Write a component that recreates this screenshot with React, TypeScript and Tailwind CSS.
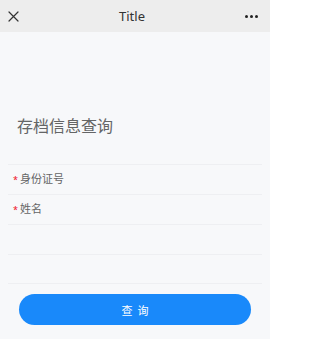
import React from "react";

export default function App() {
  const font = { fontFamily: '"Noto Sans", "Noto Sans CJK SC", sans-serif' };
  return (
    <div className="w-[270px] h-[339px] bg-[#f7f8fa] overflow-hidden" style={font}>
      <div className="h-[32px] bg-[#ededed] flex items-center justify-between px-[8px]">
        <svg width="11" height="11" viewBox="0 0 11 11">
          <path d="M1 1 L10 10 M10 1 L1 10" stroke="#333" strokeWidth="1.2" strokeLinecap="round" />
        </svg>
        <div className="text-[13px] text-[#333] leading-none">Title</div>
        <div className="flex gap-[2px] mr-[4px]">
          <span className="w-[3px] h-[3px] rounded-full bg-[#222]" />
          <span className="w-[3px] h-[3px] rounded-full bg-[#222]" />
          <span className="w-[3px] h-[3px] rounded-full bg-[#222]" />
        </div>
      </div>
      <div className="pt-[82px] pb-[26px] px-[17px]">
        <div className="text-[16px] leading-[24px] text-[#646566]">存档信息查询</div>
      </div>
      <div className="mx-[8px]">
        <div className="h-[30px] border-t border-[#eeeff2] flex items-center pl-[5px] text-[11px] text-[#646566]">
          <span className="text-[#ee0a24] mr-[2px] text-[9px]">*</span>身份证号
        </div>
        <div className="h-[30px] border-t border-[#eeeff2] flex items-center pl-[5px] text-[11px] text-[#646566]">
          <span className="text-[#ee0a24] mr-[2px] text-[9px]">*</span>姓名
        </div>
        <div className="h-[30px] border-t border-[#eeeff2]" />
        <div className="h-[30px] border-t border-b border-[#eeeff2]" />
      </div>
      <div className="px-[19px] mt-[10px]">
        <button className="w-full h-[31px] rounded-full bg-[#1989fa] text-white text-[11px] tracking-[5px] pl-[5px] pt-[3px] flex items-center justify-center">
          查询
        </button>
      </div>
    </div>
  );
}
